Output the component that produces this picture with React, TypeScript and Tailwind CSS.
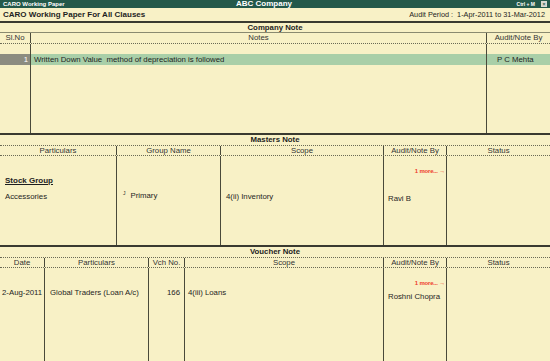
import React from 'react'

const line = 'border-[#4a4a3a]'

const App: React.FC = () => {
  return (
    <div className="w-[550px] h-[361px] overflow-hidden bg-[#f8f1c6] text-[#1e1e1e] text-[7.8px] leading-none flex flex-col" style={{ fontFamily: '"Liberation Sans", Arial, sans-serif' }}>
      {/* Title bar */}
      <div className="h-[8px] bg-[#24594a] text-white font-bold flex items-center px-[3px] relative">
        <span className="text-[6px]">CARO Working Paper</span>
        <span className="absolute left-[236px] top-0 text-[8px] leading-[8px] font-bold">ABC Company</span>
        <span className="ml-auto text-[5px] mr-[6px]">Ctrl + M</span>
        <span className="w-[6px] h-[6px] bg-[#d8d8d0] text-[#24594a] text-[5px] flex items-center justify-center">×</span>
      </div>

      {/* Report header */}
      <div className="h-[15px] flex items-center px-[3px] border-b-2 border-[#3a3a30]">
        <span className="font-bold text-[8px]">CARO Working Paper For All Clauses</span>
        <span className="ml-auto text-[7.3px] mr-[2px]">Audit Period :&nbsp; 1-Apr-2011 to 31-Mar-2012</span>
      </div>

      {/* Company Note */}
      <div className="h-[10px] flex items-center justify-center font-bold border-b border-[#8a8a70]">Company Note</div>
      <div className="h-[11px] grid grid-cols-[31px_1fr_64px] border-b border-dotted border-[#6a6a55] text-[#333]">
        <div className={`flex items-center justify-center border-r ${line}`}>Sl.No</div>
        <div className="flex items-center justify-center">Notes</div>
        <div className={`flex items-center justify-center border-l ${line}`}>Audit/Note By</div>
      </div>
      <div className="h-[91px] grid grid-cols-[31px_1fr_64px] grid-rows-[10px_11px_1fr] border-b-2 border-[#3a3a30]">
        <div className={`border-r ${line}`}></div>
        <div></div>
        <div className={`border-l ${line}`}></div>
        <div className={`bg-[#8c8c80] text-white flex items-center justify-end pr-[2px] border-r ${line}`}>1</div>
        <div className="bg-[#a9cfa8] flex items-center pl-[3px]">Written Down Value&nbsp; method of depreciation is followed</div>
        <div className={`bg-[#a9cfa8] flex items-center pl-[10px] border-l ${line}`}>P C Mehta</div>
        <div className={`border-r ${line}`}></div>
        <div></div>
        <div className={`border-l ${line}`}></div>
      </div>

      {/* Masters Note */}
      <div className="h-[11px] flex items-center justify-center font-bold border-b border-dotted border-[#6a6a55]">Masters Note</div>
      <div className="h-[10px] grid grid-cols-[117px_104px_163px_63px_1fr] border-b border-dotted border-[#6a6a55] text-[#333]">
        <div className={`flex items-center justify-center border-r ${line}`}>Particulars</div>
        <div className={`flex items-center justify-center border-r ${line}`}>Group Name</div>
        <div className={`flex items-center justify-center border-r ${line}`}>Scope</div>
        <div className={`flex items-center justify-center border-r ${line}`}>Audit/Note By</div>
        <div className="flex items-center justify-center">Status</div>
      </div>
      <div className="h-[91px] grid grid-cols-[117px_104px_163px_63px_1fr] border-b-2 border-[#3a3a30]">
        <div className={`border-r ${line} pl-[5px] pt-[21px]`}>
          <div className="font-bold text-[8px] underline">Stock Group</div>
          <div className="mt-[8px]">Accessories</div>
        </div>
        <div className={`border-r ${line} pl-[6px] pt-[36px] flex items-start`}>
          <span className="text-[5px] mr-[5px] -mt-[1px]">J</span>
          <span>Primary</span>
        </div>
        <div className={`border-r ${line} pl-[5px] pt-[37px]`}>4(ii) Inventory</div>
        <div className={`border-r ${line} pt-[12px]`}>
          <div className="text-right pr-[1px] text-[6px] font-bold tracking-[-0.2px] text-[#ee3b2c]">1 more... →</div>
          <div className="pl-[4px] mt-[21px]">Ravi B</div>
        </div>
        <div></div>
      </div>

      {/* Voucher Note */}
      <div className="h-[11px] flex items-center justify-center font-bold border-b border-dotted border-[#6a6a55]">Voucher Note</div>
      <div className="h-[10px] grid grid-cols-[45px_104px_36px_199px_63px_1fr] border-b border-dotted border-[#6a6a55] text-[#333]">
        <div className={`flex items-center justify-center border-r ${line}`}>Date</div>
        <div className={`flex items-center justify-center border-r ${line}`}>Particulars</div>
        <div className={`flex items-center justify-center border-r ${line}`}>Vch No.</div>
        <div className={`flex items-center justify-center border-r ${line}`}>Scope</div>
        <div className={`flex items-center justify-center border-r ${line}`}>Audit/Note By</div>
        <div className="flex items-center justify-center">Status</div>
      </div>
      <div className="flex-1 grid grid-cols-[45px_104px_36px_199px_63px_1fr]">
        <div className={`border-r ${line} pl-[2px] pt-[21px]`}>2-Aug-2011</div>
        <div className={`border-r ${line} pl-[5px] pt-[21px]`}>Global Traders (Loan A/c)</div>
        <div className={`border-r ${line} pr-[4px] pt-[21px] text-right`}>166</div>
        <div className={`border-r ${line} pl-[3px] pt-[21px]`}>4(iii) Loans</div>
        <div className={`border-r ${line} pt-[12px]`}>
          <div className="text-right pr-[1px] text-[6px] font-bold tracking-[-0.2px] text-[#ee3b2c]">1 more... →</div>
          <div className="pl-[4px] mt-[7px]">Roshni Chopra</div>
        </div>
        <div></div>
      </div>
    </div>
  )
}

export default App
